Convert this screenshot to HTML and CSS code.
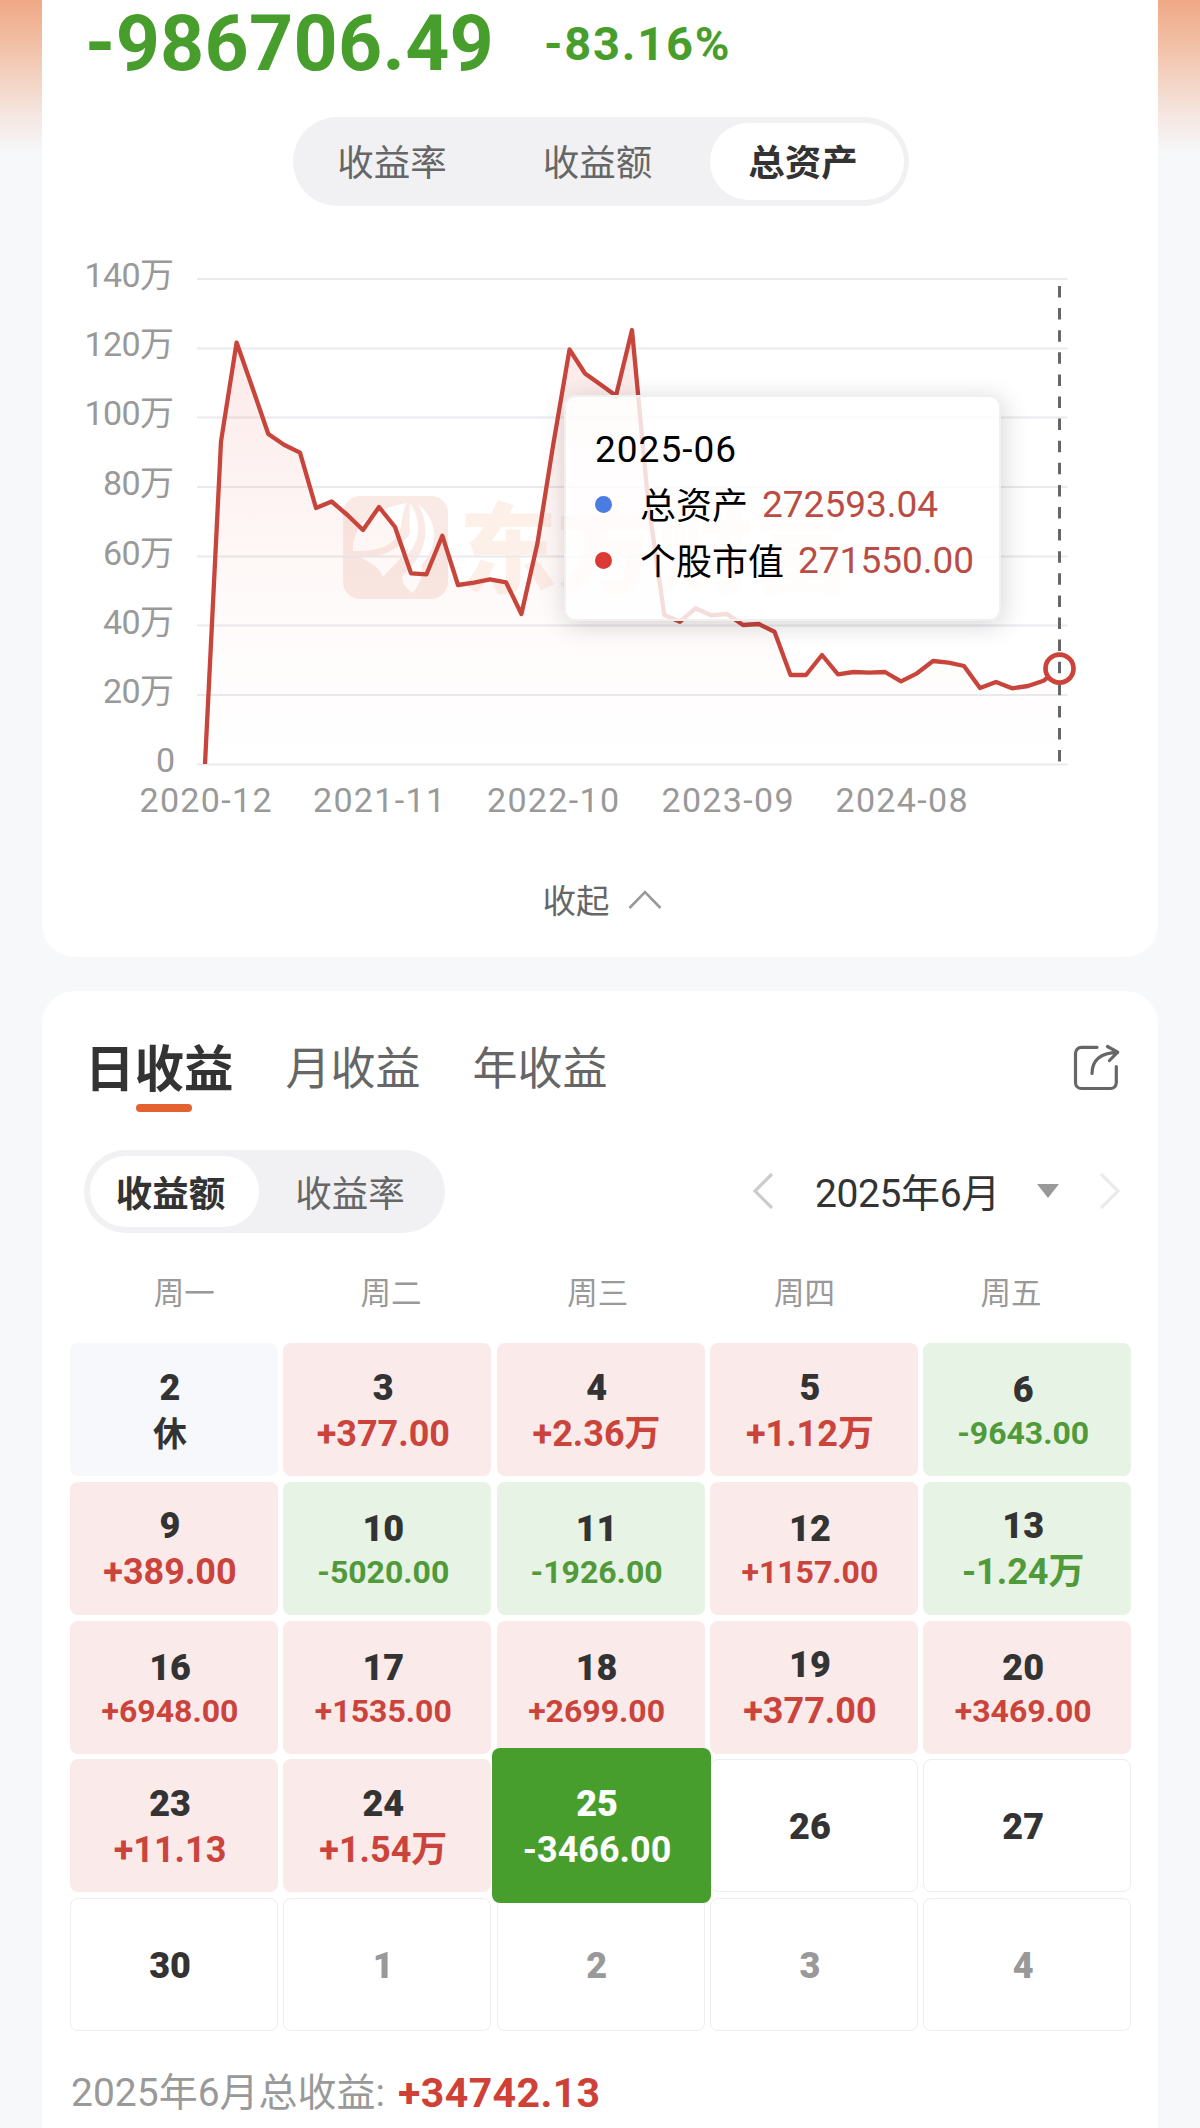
FILE: index.html
```html
<!DOCTYPE html>
<html lang="zh-CN">
<head>
<meta charset="utf-8">
<title>收益日历</title>
<link rel="stylesheet" href="styles.css">
</head>
<body>
<main class="page">
  <section class="card summary">
    <div class="totals">
      <span class="total-amount">-986706.49</span>
      <span class="total-rate">-83.16%</span>
    </div>
    <div class="segmented segmented-top">
      <span class="segment">收益率</span>
      <span class="segment">收益额</span>
      <span class="segment active">总资产</span>
    </div>
    <div class="chart">
      <svg class="chart-svg" viewBox="42 230 1116 600" width="1116" height="600">
        <defs>
          <linearGradient id="area" gradientUnits="userSpaceOnUse" x1="0" y1="330" x2="0" y2="764">
            <stop offset="0" stop-color="#e0453b" stop-opacity="0.12"/>
            <stop offset="0.6" stop-color="#e8604a" stop-opacity="0.035"/>
            <stop offset="1" stop-color="#f0806a" stop-opacity="0"/>
          </linearGradient>
        </defs>
        <g class="watermark">
          <rect x="343" y="496" width="105" height="103" rx="17" fill="#f9eae5"/>
          <path d="M353 551C352 523 375 509 407 503C399 520 404 530 394 540C385 550 368 551 353 551Z" fill="#fff"/>
          <path d="M360 557C382 559 402 548 412 530C412 551 396 562 383 577C380 567 370 563 360 557Z" fill="#fff"/>
          <path d="M410 503C422 520 421 543 405 557C413 540 408 523 410 503ZM418 504C440 522 438 548 421 565C425 575 418 586 413 593C405 588 402 582 402 576C426 556 432 529 418 504Z" fill="#fff"/>
          <text class="watermark-text" x="459" y="585">东方财富</text>
        </g>
        <path class="grid" d="M197 279H1067.500M197 348.500H1067.500M197 417.500H1067.500M197 487H1067.500M197 556.500H1067.500M197 625.500H1067.500M197 695H1067.500M197 764.500H1067.500"/>
        <path fill="url(#area)" d="M205 764L221 441.500L236.600 342.500L252.500 388L268.300 434L284 444.700L300 452.600L316 508L331.600 501.500L347.400 515L363 530L379 507L395 527L411 573.300L426.500 574.300L442.300 535.700L458 585L474 582.700L490 579.300L506 582.300L521.400 614L537.500 543L553 446L569.500 349.500L585 373.500L600.500 384.500L616 395.700L632 330L648 500L664.300 615L680 621.700L695.500 608.300L711 615.300L727 614L743 625L758.700 624L774.500 631.700L790.500 675L806 675L822 655L838 674.300L853.600 672L869 672.700L885 672L901 681.300L917 673.300L933 661L948.600 662.700L964 666L980 688L996 682L1012 688.300L1028 686L1043.500 680.700L1059.500 668.600V764Z"/>
        <path class="line" d="M205 764L221 441.500L236.600 342.500L252.500 388L268.300 434L284 444.700L300 452.600L316 508L331.600 501.500L347.400 515L363 530L379 507L395 527L411 573.300L426.500 574.300L442.300 535.700L458 585L474 582.700L490 579.300L506 582.300L521.400 614L537.500 543L553 446L569.500 349.500L585 373.500L600.500 384.500L616 395.700L632 330L648 500L664.300 615L680 621.700L695.500 608.300L711 615.300L727 614L743 625L758.700 624L774.500 631.700L790.500 675L806 675L822 655L838 674.300L853.600 672L869 672.700L885 672L901 681.300L917 673.300L933 661L948.600 662.700L964 666L980 688L996 682L1012 688.300L1028 686L1043.500 680.700L1059.500 668.600"/>
        <circle cx="1059.500" cy="668.600" r="14" fill="#fff"/>
        <path class="cursor" d="M1059.500 286V764"/>
        <circle class="marker" cx="1059.500" cy="668.600" r="14"/>
        <g class="axis axis-y">
          <text x="173.500" y="286.500">140万</text>
          <text x="173.500" y="355.500">120万</text>
          <text x="173.500" y="425">100万</text>
          <text x="173.500" y="494.500">80万</text>
          <text x="173.500" y="564.500">60万</text>
          <text x="173.500" y="633.500">40万</text>
          <text x="173.500" y="703">20万</text>
          <text x="174.500" y="772">0</text>
        </g>
        <g class="axis axis-x">
          <text x="205.500" y="812" textLength="132">2020-12</text>
          <text x="379" y="812" textLength="132">2021-11</text>
          <text x="553" y="812" textLength="132">2022-10</text>
          <text x="727.500" y="812" textLength="132">2023-09</text>
          <text x="901.500" y="812" textLength="132">2024-08</text>
        </g>
      </svg>
      <div class="tooltip">
        <div class="tooltip-date">2025-06</div>
        <div class="tooltip-row"><i class="dot blue"></i><span>总资产</span><b>272593.04</b></div>
        <div class="tooltip-row"><i class="dot red"></i><span>个股市值</span><b>271550.00</b></div>
      </div>
    </div>
    <div class="collapse">
      <span>收起</span>
      <svg width="34" height="20" viewBox="0 0 34 20"><path d="M1.500 18L17 2L32.500 18" fill="none" stroke="#999" stroke-width="2.600"/></svg>
    </div>
  </section>

  <section class="card calendar">
    <div class="tabs">
      <span class="tab active">日收益</span>
      <span class="tab">月收益</span>
      <span class="tab">年收益</span>
      <svg class="share" width="48" height="48" viewBox="0 0 48 48" fill="none" stroke="#666" stroke-width="3.200" stroke-linecap="round" stroke-linejoin="round">
        <path d="M24 3.300H8.500A6 6 0 0 0 2.500 9.300V38.700A6 6 0 0 0 8.500 44.500H37.500A6 6 0 0 0 43.300 38.700V22.500"/>
        <path d="M19 29.500C19 16.500 27 8.700 44.500 8.700M34.500 2.500L44.700 8.200L36.500 16.500"/>
      </svg>
    </div>
    <div class="controls">
      <div class="segmented segmented-small">
        <span class="segment active">收益额</span>
        <span class="segment">收益率</span>
      </div>
      <div class="month-nav">
        <svg width="22" height="38" viewBox="0 0 22 38"><path d="M20 2L3 19L20 36" fill="none" stroke="#ccc" stroke-width="3.200"/></svg>
        <span class="month">2025年6月</span>
        <svg class="caret" width="22" height="14" viewBox="0 0 22 14"><path d="M0 0H22L11 14Z" fill="#999"/></svg>
        <svg width="22" height="38" viewBox="0 0 22 38"><path d="M2 2L19 19L2 36" fill="none" stroke="#ebebeb" stroke-width="3.200"/></svg>
      </div>
    </div>
    <div class="weekdays"><span>周一</span><span>周二</span><span>周三</span><span>周四</span><span>周五</span></div>
    <div class="days">
      <div class="day rest"><b>2</b><em>休</em></div>
      <div class="day up"><b>3</b><em>+377.00</em></div>
      <div class="day up"><b>4</b><em>+2.36万</em></div>
      <div class="day up"><b>5</b><em>+1.12万</em></div>
      <div class="day down"><b>6</b><em class="long">-9643.00</em></div>

      <div class="day up"><b>9</b><em>+389.00</em></div>
      <div class="day down"><b>10</b><em class="long">-5020.00</em></div>
      <div class="day down"><b>11</b><em class="long">-1926.00</em></div>
      <div class="day up"><b>12</b><em class="long">+1157.00</em></div>
      <div class="day down"><b>13</b><em>-1.24万</em></div>

      <div class="day up"><b>16</b><em class="long">+6948.00</em></div>
      <div class="day up"><b>17</b><em class="long">+1535.00</em></div>
      <div class="day up"><b>18</b><em class="long">+2699.00</em></div>
      <div class="day up"><b>19</b><em>+377.00</em></div>
      <div class="day up"><b>20</b><em class="long">+3469.00</em></div>

      <div class="day up"><b>23</b><em>+11.13</em></div>
      <div class="day up"><b>24</b><em>+1.54万</em></div>
      <div class="day selected"><b>25</b><em>-3466.00</em></div>
      <div class="day empty"><b>26</b></div>
      <div class="day empty"><b>27</b></div>

      <div class="day empty"><b>30</b></div>
      <div class="day empty other"><b>1</b></div>
      <div class="day empty other"><b>2</b></div>
      <div class="day empty other"><b>3</b></div>
      <div class="day empty other"><b>4</b></div>
    </div>
    <div class="month-total"><span>2025年6月总收益:</span><b>+34742.13</b></div>
  </section>
</main>
</body>
</html>
```
FILE: styles.css
```css
* { box-sizing: border-box; }

body {
  margin: 0;
  background: #f6f8fa;
  color: #333;
  font-family: Roboto, "Noto Sans CJK SC", sans-serif;
}

.page {
  width: 1200px;
  height: 2128px;
  overflow: hidden;
  padding: 0 42px;
  display: flex;
  flex-direction: column;
  gap: 34px;
  background: linear-gradient(#f0a885 0, #f2c3aa 50px, #f5e4dd 110px, #f6f8fa 152px);
}

.card { background: #fff; flex: none; }

.summary {
  height: 957px;
  border-radius: 0 0 33px 33px;
  display: flex;
  flex-direction: column;
}

.totals {
  height: 117px;
  padding-left: 43px;
  display: flex;
  align-items: flex-start;
  gap: 49px;
  color: #489e2d;
  font-weight: 700;
  white-space: nowrap;
}
.total-amount { font-size: 77px; line-height: 88px; width: 410px; letter-spacing: 0.3px; }
.total-rate { font-size: 47px; line-height: 88px; letter-spacing: 1.8px; }

.segmented {
  display: flex;
  background: #f1f1f4;
  border-radius: 50px;
  color: #666;
  font-size: 36.5px;
}
.segment {
  flex: 1;
  display: flex;
  align-items: center;
  justify-content: center;
  border-radius: 50px;
}
.segment.active { background: #fff; color: #333; font-weight: 700; }
.segmented-top {
  align-self: center;
  position: relative;
  left: 1px;
  width: 616px;
  height: 89px;
  padding: 6px 5px 6px 0;
}
.segmented-top .segment { flex: 0 0 194px; padding-bottom: 2px; }
.segmented-top .segment:first-child { flex-basis: 202px; padding-right: 4px; }
.segmented-top .segment:nth-child(2) { flex-basis: 215px; padding-right: 10px; }
.segmented-top .active { padding-right: 8px; }

.chart { position: relative; margin-top: 24px; height: 600px; }
.chart-svg { display: block; }
.watermark-text { font-size: 98px; font-weight: 900; fill: #fcf0e9; }
.grid { stroke: #e9eaed; stroke-width: 2; fill: none; }
.line { stroke: #c8453c; stroke-width: 4.300; fill: none; stroke-linejoin: round; }
.cursor { stroke: #666; stroke-width: 3; stroke-dasharray: 11.5 10.600; fill: none; }
.marker { stroke: #cc433b; stroke-width: 4.700; fill: none; }
.axis { fill: #999; font-size: 34px; }
.axis-y { text-anchor: end; letter-spacing: -0.6px; }
.axis-x { text-anchor: middle; }

.tooltip {
  position: absolute;
  left: 522px;
  top: 165px;
  width: 437px;
  height: 226px;
  padding: 26px 29px;
  border: 2px solid #f0f0f0;
  border-radius: 11px;
  background: rgba(255, 255, 255, 0.82);
  background-clip: padding-box;
  box-shadow: 2px 4px 26px rgba(0, 0, 0, 0.17);
  color: #000;
  font-size: 37px;
  white-space: nowrap;
}
.tooltip-date { line-height: 54px; letter-spacing: 1px; }
.tooltip-row { display: flex; align-items: center; height: 55.5px; font-size: 36px; }
.tooltip-row span { margin-top: -3px; }
.tooltip-row b { margin-left: 14px; font-size: 37px; font-weight: 400; color: #b94d45; }
.dot { flex: none; width: 17px; height: 17px; margin-right: 28px; border-radius: 50%; }
.blue { background: #4b7ce1; }
.red { background: #da3a33; }

.collapse {
  margin-top: 47px;
  padding-left: 4px;
  display: flex;
  align-items: center;
  justify-content: center;
  gap: 18px;
  color: #666;
  font-size: 33.5px;
  line-height: 50px;
}
.collapse svg { margin-top: -5px; }

.calendar { height: 1180px; border-radius: 33px; }

.tabs {
  height: 158px;
  padding: 0 37px 0 43px;
  display: flex;
  align-items: flex-start;
  color: #666;
}
.tab { margin-right: 52px; font-size: 45px; line-height: 158px; }
.tab.active {
  display: flex;
  flex-direction: column;
  align-items: center;
  color: #333;
  font-size: 49.5px;
  font-weight: 700;
}
.tab.active::after {
  content: "";
  width: 56px;
  height: 8px;
  margin-top: -45px;
  margin-left: 9px;
  border-radius: 4px;
  background: #e4622f;
}
.share { margin: 53px 0 0 auto; }

.controls {
  height: 84px;
  padding: 0 37px 0 42px;
  display: flex;
  justify-content: space-between;
  align-items: center;
}
.segmented-small { width: 361px; height: 83px; padding: 6px; }
.segmented-small .active { flex: 0 0 169px; padding-right: 8px; }
.segmented-small .segment:last-child { padding-left: 2px; }

.month-nav { display: flex; align-items: center; }
.month { margin: -3px 0 0 41px; width: 182px; font-size: 39px; white-space: nowrap; letter-spacing: -0.4px; text-align: center; }
.caret { margin: 0 40px 0 40px; }

.weekdays {
  height: 110px;
  padding: 6px 42px 0 39px;
  display: grid;
  grid-template-columns: repeat(5, 206.700px);
  align-items: center;
  text-align: center;
  color: #999;
  font-size: 30.5px;
}

.days {
  padding-left: 28px;
  display: grid;
  grid-template-columns: repeat(5, 208px);
  grid-auto-rows: 133px;
  gap: 5.800px 5.300px;
}
.day {
  position: relative;
  padding: 2px 8px 0 0;
  border-radius: 8px;
  display: flex;
  flex-direction: column;
  align-items: center;
  justify-content: center;
  font-size: 36px;
  font-weight: 700;
  line-height: 46px;
}
.day em { font-style: normal; white-space: nowrap; }
.day .long { font-size: 32px; line-height: 41px; }
.rest { background: #f6f8fb; }
.rest em { font-size: 34px; }
.up { background: #faeaea; }
.up em { color: #cb443c; }
.down { background: #e7f3e5; }
.down em { color: #509a39; }
.empty { border: 1.500px solid #ededed; }
.other { color: #999; }
.selected {
  z-index: 1;
  margin: -11px -6px -11px -5px;
  background: #489e2d;
  color: #fff;
}

.month-total {
  margin-top: 34px;
  padding-left: 29px;
  display: flex;
  align-items: center;
  gap: 13px;
  color: #999;
  font-size: 39px;
  line-height: 56px;
  white-space: nowrap;
}
.month-total b { color: #cf4037; font-size: 41px; letter-spacing: 0.4px; }
```
